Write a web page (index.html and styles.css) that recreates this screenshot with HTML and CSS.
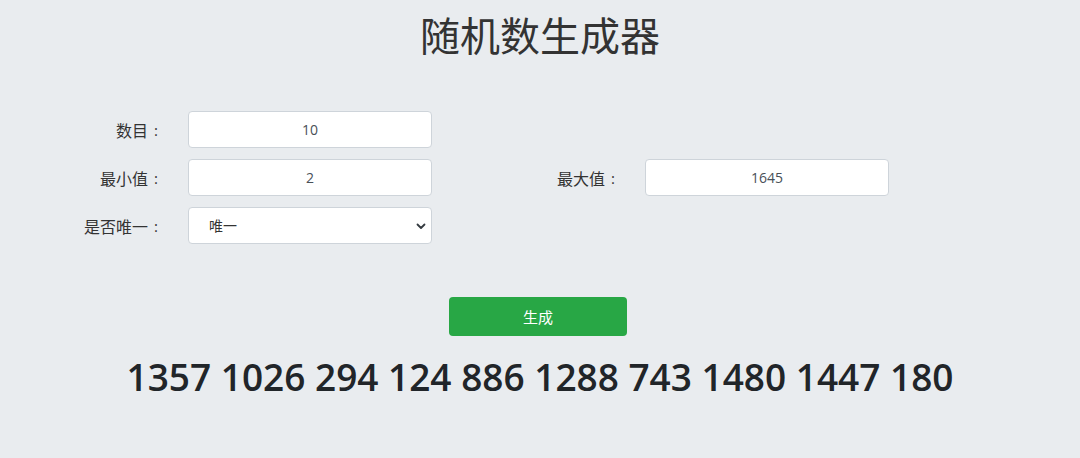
FILE: index.html
```html
<!DOCTYPE html>
<html lang="zh-CN">

<head>
    <meta charset="UTF-8">
    <meta name="viewport" content="width=device-width, initial-scale=1.0">
    <title>随机数生成器</title>
    <link rel="stylesheet" href="styles.css">
</head>

<body>
    <h1 class="title">随机数生成器</h1>

    <div class="form-grid">
        <label class="label" for="count">数目<span class="colon">:</span></label>
        <input class="field" id="count" type="text" value="10">
        <span></span>
        <span></span>

        <label class="label" for="min">最小值<span class="colon">:</span></label>
        <input class="field" id="min" type="text" value="2">
        <label class="label" for="max">最大值<span class="colon">:</span></label>
        <input class="field" id="max" type="text" value="1645">

        <label class="label" for="unique">是否唯一<span class="colon">:</span></label>
        <div class="select-wrap">
            <select class="field select" id="unique">
                <option>唯一</option>
                <option>不唯一</option>
            </select>
            <svg class="chevron" width="10" height="8" viewBox="0 0 10 8">
                <path d="M1.5 2.5 L5 6 L8.5 2.5" fill="none" stroke="#343a40" stroke-width="1.8" stroke-linecap="round" stroke-linejoin="round"/>
            </svg>
        </div>
    </div>

    <div class="button-container">
        <button class="button" id="generate">生成</button>
    </div>

    <div class="result" id="result">1357 1026 294 124 886 1288 743 1480 1447 180</div>
</body>

</html>
```

FILE: styles.css
```css
body {
    margin: 0;
    background-color: #e9ecef;
    font-family: "Open Sans", "Noto Sans CJK SC", sans-serif;
    color: #333;
}

.title {
    margin: 0;
    padding-top: 10px;
    text-align: center;
    font-size: 40px;
    font-weight: 400;
    line-height: 52px;
    color: #333;
}

.form-grid {
    display: grid;
    grid-template-columns: 160px 244px 157px 244px;
    grid-auto-rows: 37px;
    column-gap: 28px;
    row-gap: 11px;
    margin-top: 49px;
}

.label {
    display: flex;
    align-items: center;
    justify-content: flex-end;
    padding-right: 2px;
    font-size: 16px;
    color: #333;
}

.colon {
    margin-left: 6px;
    font-size: 15px;
}

.field {
    box-sizing: border-box;
    width: 100%;
    height: 37px;
    border: 1px solid #ced4da;
    border-radius: 4px;
    background-color: white;
    font-family: "Open Sans", "Noto Sans CJK SC", sans-serif;
    font-size: 14px;
    color: #495057;
    text-align: center;
    outline: none;
}

.select-wrap {
    position: relative;
}

.select {
    appearance: none;
    text-align: left;
    padding-left: 20px;
    color: #333;
}

.chevron {
    position: absolute;
    right: 6px;
    top: 15px;
    pointer-events: none;
}

.button-container {
    display: flex;
    justify-content: center;
    margin-top: 53px;
    padding-right: 4px;
}

.button {
    width: 178px;
    height: 39px;
    border: none;
    border-radius: 4px;
    background-color: #28a745;
    color: white;
    font-family: "Open Sans", "Noto Sans CJK SC", sans-serif;
    font-size: 15px;
    cursor: pointer;
}

.result {
    margin-top: 15px;
    text-align: center;
    font-size: 37px;
    font-weight: 600;
    color: #212529;
}
```
